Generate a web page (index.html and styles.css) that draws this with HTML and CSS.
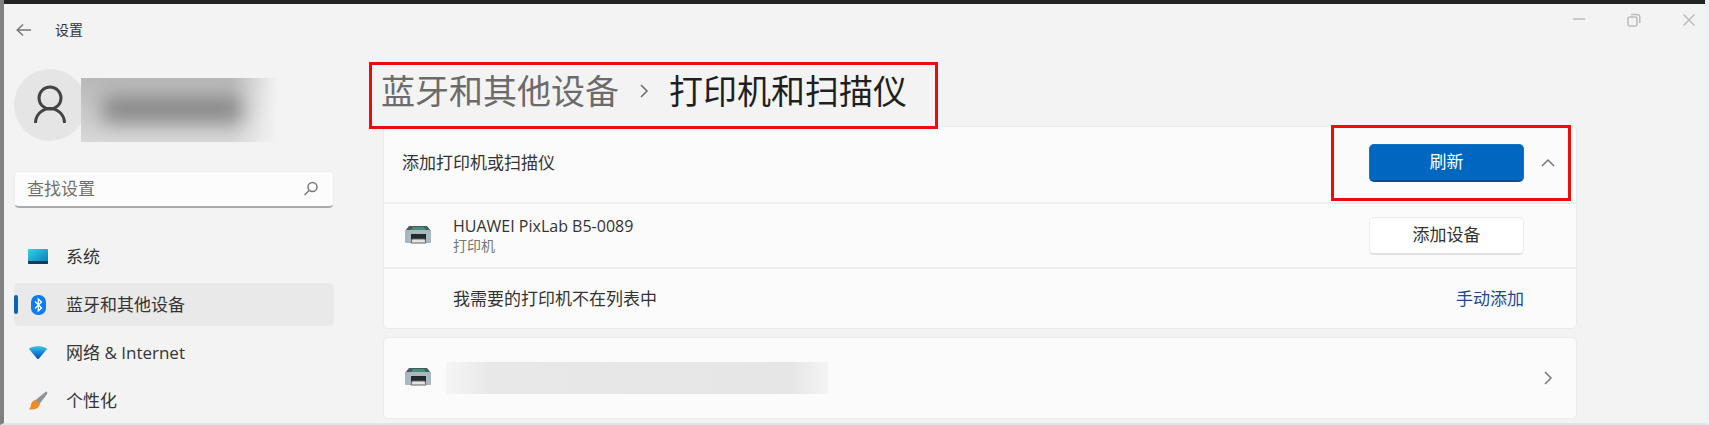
FILE: index.html
```html
<!DOCTYPE html>
<html lang="zh-CN">
<head>
    <meta charset="UTF-8">
    <meta name="viewport" content="width=device-width, initial-scale=1.0">
    <title>设置</title>
    <link rel="stylesheet" href="styles.css">
</head>
<body>
    <div class="window">
        <header class="titlebar">
            <div class="titlebar-left">
                <button class="icon-btn" aria-label="返回">
                    <svg width="16" height="16" viewBox="0 0 16 16"><path d="M7 2.5L1.2 8L7 13.5M1.2 8H15"/></svg>
                </button>
                <span class="app-title">设置</span>
            </div>
            <div class="titlebar-right">
                <button class="icon-btn" aria-label="最小化">
                    <svg width="14" height="14" viewBox="0 0 14 14"><path d="M1 6H13"/></svg>
                </button>
                <button class="icon-btn" aria-label="还原">
                    <svg width="14" height="14" viewBox="0 0 14 14"><rect x="1" y="4" width="9" height="9" rx="2"/><path d="M4 1.5H10Q12.8 1.5 12.8 4.5V10"/></svg>
                </button>
                <button class="icon-btn" aria-label="关闭">
                    <svg width="14" height="14" viewBox="0 0 14 14"><path d="M1.5 1.5L12.5 12.5M12.5 1.5L1.5 12.5"/></svg>
                </button>
            </div>
        </header>

        <div class="layout">
            <aside class="sidebar">
                <div class="account">
                    <div class="avatar">
                        <svg width="36" height="40" viewBox="0 0 36 40"><circle cx="18" cy="13" r="11"/><path d="M3.5 38A14.5 14.5 0 0 1 32.5 38"/></svg>
                    </div>
                    <div class="account-name"></div>
                </div>

                <form class="search">
                    <input type="text" placeholder="查找设置" aria-label="查找设置">
                    <svg width="16" height="16" viewBox="0 0 16 16"><circle cx="9.5" cy="6" r="4.5"/><path d="M6 9.5L1.5 14"/></svg>
                </form>

                <nav class="nav">
                    <a href="#">
                        <svg width="20" height="20" viewBox="0 0 20 20">
                            <defs><linearGradient id="sys" x1="0" y1="0" x2="1" y2="1"><stop offset="0" stop-color="#35d3e6"/><stop offset="1" stop-color="#0b74b8"/></linearGradient></defs>
                            <rect x="0" y="2" width="20" height="15" rx="1" fill="url(#sys)"/>
                            <path d="M0 14H20V16Q20 17 19 17H1Q0 17 0 16Z" fill="#0b3d5c"/>
                        </svg>
                        系统
                    </a>
                    <a href="#" class="active">
                        <svg width="20" height="20" viewBox="0 0 20 20">
                            <rect x="3" y="0" width="15" height="20" rx="7" fill="#0a7cf5"/>
                            <path d="M7 6.5L13.5 13L10.3 16V4L13.5 7L7 13.5" fill="none" stroke="#fff" stroke-width="1.3"/>
                        </svg>
                        蓝牙和其他设备
                    </a>
                    <a href="#">
                        <svg width="20" height="20" viewBox="0 0 20 20">
                            <defs><linearGradient id="net" x1="0" y1="0" x2="0" y2="1"><stop offset="0" stop-color="#3ccbe8"/><stop offset="0.5" stop-color="#1587d8"/><stop offset="1" stop-color="#0d4ba0"/></linearGradient></defs>
                            <path d="M1 6Q1 5 3 4.500Q10 1.500 17 4.500Q19 5 19 6L11 15.500Q10 16.500 9 15.500Z" fill="url(#net)"/>
                        </svg>
                        网络 &amp; Internet
                    </a>
                    <a href="#">
                        <svg width="20" height="20" viewBox="0 0 20 20">
                            <path d="M18 0.500Q20 0.500 19 3L11.500 13L7 9.500Z" fill="#8b9299"/>
                            <path d="M7.500 9L12 13Q11 19 1 18.500Q3 16.500 3 13.500Q4.500 9 7.500 9Z" fill="#f08a24"/>
                        </svg>
                        个性化
                    </a>
                </nav>
            </aside>

            <main class="content">
                <h1 class="breadcrumb marked">
                    <a href="#">蓝牙和其他设备</a>
                    <svg width="10" height="16" viewBox="0 0 10 16"><path d="M2 2L8 8L2 14"/></svg>
                    <span>打印机和扫描仪</span>
                </h1>

                <section class="card">
                    <div class="row row-add">
                        <span class="label">添加打印机或扫描仪</span>
                        <div class="actions marked">
                            <button class="btn primary">刷新</button>
                            <button class="icon-btn chevron" aria-label="折叠">
                                <svg width="14" height="14" viewBox="0 0 14 14"><path d="M1 10L7 4L13 10"/></svg>
                            </button>
                        </div>
                    </div>
                    <div class="row row-device">
                        <svg class="printer" width="28" height="20" viewBox="0 0 28 20">
                            <path d="M5 1H23L27 6H1Z" fill="#4b5a60"/>
                            <path d="M9 2H20L22 5H7Z" fill="#3f9379"/>
                            <rect x="1" y="5" width="26" height="13" rx="1" fill="#a9b8c0"/>
                            <rect x="7" y="9" width="15" height="6" fill="#22282b"/>
                            <path d="M8 14H21L22 18H7Z" fill="#e4e4e4" stroke="#666" stroke-width="1"/>
                        </svg>
                        <div class="label">
                            <div class="name">HUAWEI PixLab B5-0089</div>
                            <div class="kind">打印机</div>
                        </div>
                        <button class="btn">添加设备</button>
                    </div>
                    <div class="row row-manual">
                        <span class="label">我需要的打印机不在列表中</span>
                        <a href="#" class="link">手动添加</a>
                    </div>
                </section>

                <section class="card">
                    <div class="row row-printer">
                        <svg class="printer" width="28" height="20" viewBox="0 0 28 20">
                            <path d="M5 1H23L27 6H1Z" fill="#4b5a60"/>
                            <path d="M9 2H20L22 5H7Z" fill="#3f9379"/>
                            <rect x="1" y="5" width="26" height="13" rx="1" fill="#a9b8c0"/>
                            <rect x="7" y="9" width="15" height="6" fill="#22282b"/>
                            <path d="M8 14H21L22 18H7Z" fill="#e4e4e4" stroke="#666" stroke-width="1"/>
                        </svg>
                        <div class="hidden-name"></div>
                        <button class="icon-btn chevron" aria-label="打开">
                            <svg width="14" height="14" viewBox="0 0 14 14"><path d="M4 1L10 7L4 13"/></svg>
                        </button>
                    </div>
                </section>
            </main>
        </div>
    </div>
</body>
</html>
```
FILE: styles.css
```css
* {
    box-sizing: border-box;
}

body {
    margin: 0;
    font-family: "Open Sans", "Noto Sans CJK SC", sans-serif;
    font-size: 17px;
    line-height: 24px;
    color: #333;
    background: #f3f3f3;
}

a {
    color: inherit;
    text-decoration: none;
}

button,
input {
    font: inherit;
    color: inherit;
}

.window {
    min-height: 100vh;
    border-left: 4px solid #808080;
    border-right: 4px solid #edf2f9;
    border-bottom: 2px solid #e4e4e4;
}

/* Title bar */
.titlebar {
    display: flex;
    justify-content: space-between;
    align-items: flex-start;
    height: 69px;
    padding: 0 9px 0 12px;
    border-top: 4px solid #232323;
}

.titlebar-left {
    display: flex;
    align-items: center;
    gap: 23px;
    padding-top: 14px;
}

.titlebar-right {
    display: flex;
    gap: 41px;
    padding-top: 9px;
    color: #bbb;
}

.app-title {
    font-size: 14px;
}

.icon-btn {
    display: flex;
    padding: 0;
    border: none;
    background: none;
    cursor: pointer;
}

.icon-btn svg,
.avatar svg,
.search svg,
.breadcrumb svg {
    fill: none;
    stroke: currentColor;
    stroke-width: 1.5;
}

.titlebar-left .icon-btn,
.chevron {
    color: #777;
}

.layout {
    display: flex;
    gap: 49px;
    padding: 0 128px 0 10px;
}

/* Sidebar */
.sidebar {
    flex: none;
    width: 320px;
}

.account {
    display: flex;
    align-items: center;
    height: 72px;
}

.avatar {
    display: flex;
    justify-content: center;
    align-items: center;
    width: 72px;
    height: 72px;
    border-radius: 50%;
    background: #e5e5e5;
    color: #444;
}

.avatar svg {
    stroke-width: 3;
}

.account-name {
    width: 200px;
    height: 64px;
    margin: 10px 0 0 -5px;
    padding: 18px 40px 20px 22px;
    overflow: hidden;
    background: linear-gradient(to right, transparent 75%, #f3f3f3 98%), linear-gradient(#b8b8b8, #d8d8d8);
}

.account-name::before {
    content: "";
    display: block;
    height: 100%;
    background: #858585;
    filter: blur(10px);
}

.search {
    display: flex;
    align-items: center;
    height: 37px;
    margin: 30px 0 27px;
    padding: 0 14px 0 12px;
    border: 1px solid #ededed;
    border-bottom: 2px solid #aaa;
    border-radius: 5px;
    background: #fcfcfc;
    color: #777;
}

.search input {
    flex: 1;
    min-width: 0;
    padding: 0;
    border: none;
    outline: none;
    background: none;
}

.search input::placeholder {
    color: #707070;
}

.nav {
    display: grid;
    gap: 5px;
}

.nav a {
    display: flex;
    align-items: center;
    gap: 18px;
    height: 43px;
    padding-left: 14px;
    border-radius: 5px;
}

.nav .active {
    position: relative;
    background: #e9e9e9;
}

.nav .active::before {
    content: "";
    position: absolute;
    left: 0;
    top: 12px;
    width: 4px;
    height: 19px;
    border-radius: 2px;
    background: #0b63b8;
}

/* Main content */
.content {
    flex: 1;
    min-width: 0;
}

.breadcrumb {
    display: flex;
    align-items: center;
    gap: 20px;
    width: max-content;
    height: 44px;
    margin: 0 0 13px -2px;
    font-size: 34px;
    line-height: 44px;
    font-weight: 400;
    color: #1f1f1f;
}

.breadcrumb a,
.breadcrumb svg {
    color: #6b6b6b;
}

/* Red callout frames */
.marked {
    position: relative;
}

.marked::after {
    content: "";
    position: absolute;
    border: 3px solid #ec0c0c;
    pointer-events: none;
}

.breadcrumb::after {
    z-index: 1;
    inset: -7px -31px -16px -12px;
}

.actions::after {
    inset: -19px -16px -19px -38px;
}

.card {
    margin-bottom: 8px;
    border: 1px solid #ebebeb;
    border-radius: 5px;
    background: #fbfbfb;
}

.card:last-child {
    margin-bottom: 4px;
}

.row {
    display: flex;
    align-items: center;
    padding: 0 52px 0 20px;
}

.row + .row {
    border-top: 2px solid #eee;
}

.row .label {
    flex: 1;
}

.row-add {
    height: 75px;
    padding: 0 21px 4px 18px;
}

.row-device {
    height: 65px;
}

.row-manual {
    height: 61px;
    padding-left: 69px;
}

.row-printer {
    height: 80px;
    padding-right: 21px;
}

.actions {
    display: flex;
    align-items: center;
    gap: 17px;
}

.printer {
    flex: none;
    margin: 0 21px 2px 0;
}

.name {
    font-size: 16px;
    line-height: 20px;
}

.kind {
    font-size: 14px;
    line-height: 20px;
    color: #777;
}

.btn {
    width: 155px;
    height: 38px;
    padding: 0;
    border: 1px solid #ececec;
    border-bottom: 2px solid #e0e0e0;
    border-radius: 5px;
    background: #fff;
    cursor: pointer;
}

.btn.primary {
    border-color: #1670c4;
    border-bottom-color: #05509a;
    background: #0067c0;
    color: #fff;
}

.link {
    color: #1c4a94;
}

.hidden-name {
    width: 382px;
    height: 32px;
    margin: 0 auto 0 -7px;
    background: linear-gradient(to right, #f5f5f5, #e8e8e8 12%, #e6e6e6 90%, #f4f4f4);
}
```
